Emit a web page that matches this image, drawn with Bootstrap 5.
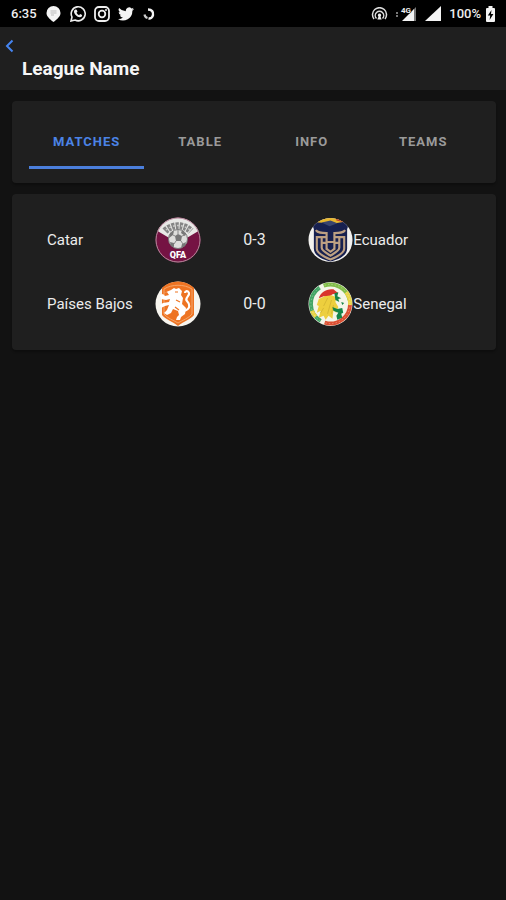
<!DOCTYPE html>
<html lang="es" data-bs-theme="dark">
<head>
<meta charset="utf-8">
<meta name="viewport" content="width=device-width, initial-scale=1">
<title>League Name</title>
<link href="https://cdn.jsdelivr.net/npm/bootstrap@5.3.0/dist/css/bootstrap.min.css" rel="stylesheet">
<style>
  body { background: #121212; color: #ececec; font-family: Roboto, "Liberation Sans", sans-serif; font-size: 15px; line-height: 24px; }
  .status-bar { background: #000; height: 27px; padding: 0 10px 0 11px; font-size: 13px; line-height: 16px; font-weight: 500; color: #eee; }
  .status-bar svg { display: block; }
  .status-icons { gap: 8px; }
  .app-header { background: #1f1f1f; height: 63px; padding: 11px 4px 8px; }
  .back-btn { width: 12px; height: 16px; color: #4584f0; }
  .app-title { font-size: 19px; line-height: 24px; font-weight: 700; padding-left: 18px; padding-top: 3px; color: #f6f6f6; }
  .page-body { padding: 11px 10px 11px 12px; gap: 11px; }
  .panel { background: #1f1f1f; border-radius: 4px; box-shadow: 0 2px 2px rgba(0,0,0,.25); }
  .tab-panel { padding: 16px 17px 14px; }
  .segment { display: grid; grid-template-columns: auto repeat(3, minmax(0, 1fr)); }
  .segment-btn { background: none; border: 0; border-bottom: 3px solid transparent; height: 52px; padding: 0 24px; color: #9a9a9a; font-size: 13px; line-height: 20px; font-weight: 700; letter-spacing: 1px; }
  .segment-btn.active { color: #4b83e6; border-bottom-color: #4b7fdc; }
  .match-panel { padding: 23px 35px; }
  .match-list { gap: 18px; }
  .match-row { display: grid; grid-template-columns: minmax(0, 1fr) 46px minmax(0, 1fr) 45px minmax(0, 1fr); align-items: center; }
  .crest { display: block; width: 100%; height: 46px; }
  .score { font-size: 16px; }
  .crest-text { font-family: Roboto, "Liberation Sans", sans-serif; font-weight: 900; }
</style>
</head>
<body>
<div class="status-bar d-flex align-items-center justify-content-between">
  <div class="status-icons d-flex align-items-center">
    <span>6:35</span>
    <svg width="17" height="18" viewBox="0 0 17 18" aria-hidden="true"><path fill="#f4f4f4" d="M8.500 1a7 7 0 0 1 7 7c0 3.300-3 6-7 9-4-3-7-5.700-7-9a7 7 0 0 1 7-7z"/><path d="M5.500 6h6M5.500 8h6M6 10h3" stroke="#bbb"/></svg>
    <svg width="16" height="17" viewBox="0 0 16 17" aria-hidden="true"><path fill="none" stroke="#eee" stroke-width="1.600" d="M1 16l1-4a7 7 0 1 1 3 3z"/><path fill="#eee" d="M5.400 4.500l1.300.2.800 2-1 1.100c.7 1.200 1.400 1.900 2.600 2.500l1-1.200 2 1c.1 1.500-1 2.300-2.300 2.200C7 12 4.200 9 4 6.700c0-1 .6-1.900 1.400-2.200z"/></svg>
    <svg width="16" height="16" viewBox="0 0 16 16" aria-hidden="true"><g fill="none" stroke="#eee" stroke-width="1.800"><rect x="1" y="1" width="14" height="14" rx="4"/><circle cx="8" cy="8" r="3.300"/></g><circle cx="12" cy="4" r="1" fill="#eee"/></svg>
    <svg width="16" height="14" viewBox="0 0 24 20" aria-hidden="true"><path fill="#f4f4f4" d="M24 2.400a10 10 0 0 1-2.800.8A5 5 0 0 0 23.300.5a10 10 0 0 1-3.100 1.200A4.900 4.900 0 0 0 11.800 6 14 14 0 0 1 1.700 1a4.900 4.900 0 0 0 1.500 6.500 5 5 0 0 1-2.200-.6 4.900 4.900 0 0 0 3.900 4.900 5 5 0 0 1-2.200.1 4.900 4.900 0 0 0 4.600 3.400A10 10 0 0 1 0 17.500 14 14 0 0 0 21.500 5a10 10 0 0 0 2.500-2.600z"/></svg>
    <svg width="14" height="14" viewBox="0 0 14 14" aria-hidden="true"><path fill="none" stroke="#f4f4f4" stroke-width="2.400" d="M6 2.500c4 0 5.500 2.500 5 5.500-.4 2.500-2.500 3.800-4.500 3.500"/><path fill="none" stroke="#ccc" stroke-width="2.200" d="M2.500 7.500c.3 1.800 1.500 3 3 3.500"/></svg>
  </div>
  <div class="d-flex align-items-center gap-2">
    <svg width="17" height="14" viewBox="0 0 17 14" aria-hidden="true"><g fill="none" stroke="#ddd" stroke-width="1.500"><path d="M3 12a7 7 0 1 1 11 0"/><path d="M5.500 11.500a4.200 4.200 0 1 1 6 0"/></g><path fill="#eee" d="M8.500 6.500a1.800 1.800 0 0 1 1 3.200l1.200 2.800H6.300l1.200-2.800a1.800 1.800 0 0 1 1-3.200z"/></svg>
    <svg width="21" height="16" viewBox="0 0 21 16" aria-hidden="true"><path fill="#777" d="M0 6h2v2H0zM0 9h2v2H0zM17 4l3-3v14h-3z"/><path fill="#f4f4f4" d="M18 3v12H6z"/><text x="5" y="7" font-size="8" font-weight="700" fill="#eee" stroke="#000" stroke-width="1" paint-order="stroke">4G</text></svg>
    <svg width="16" height="15" viewBox="0 0 16 15" aria-hidden="true"><path fill="#f4f4f4" d="M16 0v15H0z"/></svg>
    <div class="d-flex align-items-center gap-1"><span>100%</span>
    <svg width="11" height="16" viewBox="0 0 11 16" aria-hidden="true"><path fill="#f4f4f4" d="M3.500 0h4v2H9a1 1 0 0 1 1 1v12a1 1 0 0 1-1 1H2a1 1 0 0 1-1-1V3a1 1 0 0 1 1-1h1.500z"/><path fill="#000" d="M6.500 4L2.800 9.500h2.400L4.600 14l3.800-6H6z"/></svg></div>
  </div>
</div>
<header class="app-header">
  <button type="button" class="back-btn btn p-0 border-0 d-flex align-items-center" aria-label="Volver">
    <svg width="12" height="14" viewBox="0 0 12 14" aria-hidden="true"><path fill="none" stroke="currentColor" stroke-width="2" d="M8.500 1.500L3 7l5.500 5.500"/></svg>
  </button>
  <h1 class="app-title mb-0">League Name</h1>
</header>
<main class="page-body d-flex flex-column">
  <section class="panel tab-panel">
    <div class="segment" role="tablist">
      <button type="button" class="segment-btn active" role="tab" aria-selected="true">MATCHES</button>
      <button type="button" class="segment-btn" role="tab" aria-selected="false">TABLE</button>
      <button type="button" class="segment-btn" role="tab" aria-selected="false">INFO</button>
      <button type="button" class="segment-btn" role="tab" aria-selected="false">TEAMS</button>
    </div>
  </section>
  <section class="panel match-panel">
    <ul class="match-list list-unstyled mb-0 d-flex flex-column">
      <li class="match-row">
        <span>Catar</span>
        <svg class="crest" viewBox="0 0 46 46" aria-hidden="true">
          <circle cx="23" cy="23" r="22.500" fill="#751343"/>
          <path fill="#e8e8e6" d="M2.500 14A22.500 22.500 0 0 1 43.500 14L30 22H16z"/>
          <circle cx="23" cy="23" r="22" fill="none" stroke="#b58a9c" stroke-width="1"/>
          <path d="M10 14C17 7 29 7 36 14" fill="none" stroke="#858585" stroke-width="7" stroke-dasharray="3 1"/>
          <path d="M11 13C18 7 28 7 35 13" fill="none" stroke="#c9c9c7" stroke-width="1.500" stroke-dasharray="2 2"/>
          <circle cx="23" cy="22" r="9.500" fill="#dededc" stroke="#777"/>
          <path fill="#777" d="M20 19l3-2 4 2-1 5h-5zM15 16l4-2-1 4-4 3zM27 13l4 4-1 2-4-3zM15 25l4 1v4l-3-1zM27 27l4-2-1 4-4 2z"/>
          <path stroke="#888" d="M18 18l2 1m7 0l3-1m-4 6l2 3m-7-3l-2 3m4-14v4"/>
          <text class="crest-text" x="23" y="41" text-anchor="middle" font-size="9" fill="#fff">QFA</text>
        </svg>
        <span class="score text-center">0-3</span>
        <svg class="crest" viewBox="0 0 46 46" aria-hidden="true">
          <defs><clipPath id="ecRound"><circle cx="23" cy="23" r="22.500"/></clipPath></defs>
          <g clip-path="url(#ecRound)">
            <path fill="#f3f2f0" d="M0 0h46v46H0z"/>
            <path fill="#17204f" d="M6 4h34l1 5-1 3v20c0 7-9 11-17 13C15 43 6 39 6 32V12L5 9z"/>
            <path fill="#e8b72d" d="M8 0h31v4L28 6 10 5z"/>
            <path fill="#bd3b32" d="M29 0h9v5l-9-2z"/>
            <path fill="#39446f" d="M14 5l9-2 7 3-8 3z"/>
            <g fill="none" stroke="#bda083" stroke-width="2.200">
              <path d="M8 13c2 3 6 3 11 3v17M38 13c-2 3-6 3-11 3v17"/>
              <path d="M9 19v13c0 4 7 8 14 11 7-3 14-7 14-11V19"/>
              <path d="M14 20v11c0 3 4 5 9 8 5-3 9-5 9-8V20"/>
              <path d="M9 20h10M27 20h10M14 26h5M27 26h5M19 25h8M19 32l4 3 4-3"/>
            </g>
          </g>
        </svg>
        <span>Ecuador</span>
      </li>
      <li class="match-row">
        <span>Países Bajos</span>
        <svg class="crest" viewBox="0 0 46 46" aria-hidden="true">
          <circle cx="23" cy="23" r="22.500" fill="#f7f5ef"/>
          <path fill="#ee7423" d="M7 7C12 2 17 1 23 .5 29 1 34 2 39 7v27c-3 4-10 6-16 11C17 40 10 38 7 34z"/>
          <path fill="none" stroke="#f5a56a" stroke-width="1" d="M9 8C17 3 29 3 37 8v25c-3 4-9 6-14 9-5-3-11-5-14-9z"/>
          <path fill="#fff" d="M16 9l3-2 2 1 3-1 3 3-1 4 2 3-1 6 4 4-1 6-4 3-1 3h-4l1-3 2-2-1-4-5-2-2 4-4 2-3-2 3-3 2-5-4 1-4 2-1-3 3-2 6-1 1-3-4 1-5-1-1-4 3-1 2 2 4-1-2-3-3 1z"/>
          <path fill="none" stroke="#fff" stroke-width="2.200" d="M29 30c7-2 6-7 3-10-3-3 3-5 2-8-1-3-4-2-4 0"/>
          <path fill="none" stroke="#ee7423" stroke-width="1.200" d="M20 11h3m-2 8l4 2m-5 5l4 3"/>
        </svg>
        <span class="score text-center">0-0</span>
        <svg class="crest" viewBox="0 0 46 46" aria-hidden="true">
          <circle cx="23" cy="23" r="22.500" fill="#f4f5e9"/>
          <g fill="none" stroke-width="4"><path stroke="#82bd4a" d="M16 4.300A20 20 0 0 1 42.500 19"/><path stroke="#dc4f32" d="M43 23A20 20 0 0 1 17 42"/><path stroke="#42a565" d="M13 40.300A20 20 0 0 1 12 6.300"/><path stroke="#e8d346" d="M39 11A20 20 0 0 1 43 24M4 30A20 20 0 0 0 8 36"/></g>
          <circle cx="23" cy="23" r="20" fill="none" stroke="#fff" stroke-opacity=".3" stroke-width="1" stroke-dasharray="1.500 2"/>
          <path fill="#d9342c" d="M11 17c2-6 8-10 15-9l5 4-6 1-4 3-5-1z"/>
          <path fill="#edcf3e" d="M11 18l6-3 7-1 5 2-1 5 3 5-2 6-3-2-1 8-4-3-3 4-2-4-5 2 2-7-4 2 2-7-2-1z"/>
          <path fill="none" stroke="#d6b834" d="M20 17l-4 8m8-6l-4 14m6-9l-2 9m-8-6l-3 5"/>
          <path fill="#168447" d="M27 12l4-1-1 4 4 2-3 1 1 3-4-2zM25 26l5 2 5-1 1 5-2 1 1 4-5 2-1-4 2-3-5-2zM34 21l3 1-2 2z"/>
        </svg>
        <span>Senegal</span>
      </li>
    </ul>
  </section>
</main>
<script src="https://cdn.jsdelivr.net/npm/bootstrap@5.3.0/dist/js/bootstrap.bundle.min.js"></script>
</body>
</html>
